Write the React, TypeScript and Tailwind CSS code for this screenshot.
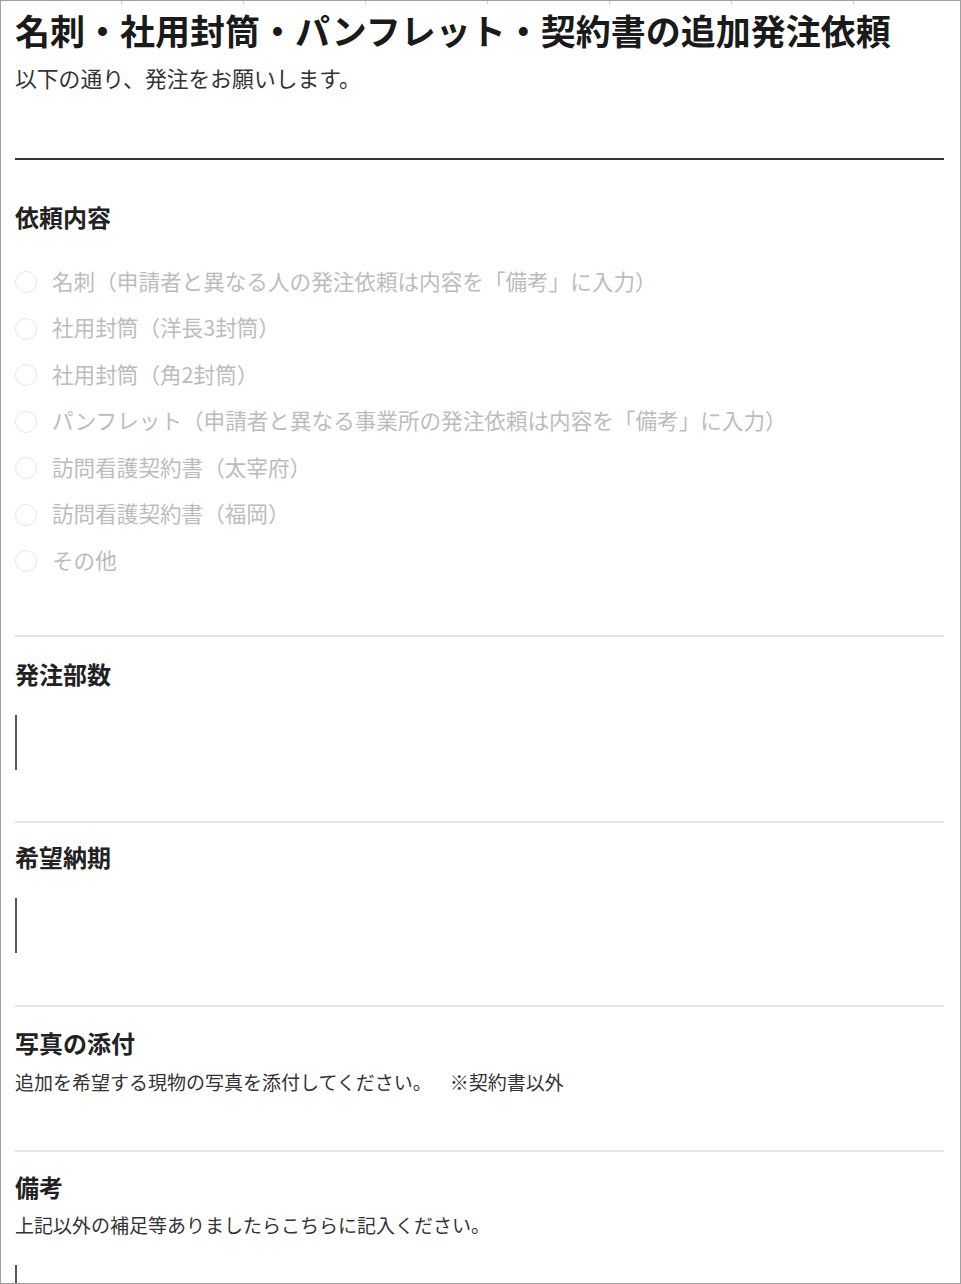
import React from 'react';

const font = { fontFamily: '"Noto Sans CJK JP", "Noto Sans", sans-serif' };

const options = [
  '名刺（申請者と異なる人の発注依頼は内容を「備考」に入力）',
  '社用封筒（洋長3封筒）',
  '社用封筒（角2封筒）',
  'パンフレット（申請者と異なる事業所の発注依頼は内容を「備考」に入力）',
  '訪問看護契約書（太宰府）',
  '訪問看護契約書（福岡）',
  'その他',
];

const ticks = [120, 242, 364, 486, 608, 730, 852];

const Heading: React.FC<{ children: React.ReactNode; className?: string }> = ({ children, className = '' }) => (
  <h2 className={`text-[24px] font-bold leading-[32px] text-[#222] ${className}`}>{children}</h2>
);

const Divider: React.FC<{ className?: string }> = ({ className = '' }) => (
  <div className={`h-[2px] bg-[#e4e4e4] ${className}`} />
);

const LineInput: React.FC<{ className?: string }> = ({ className = '' }) => (
  <div className={`h-[55px] border-l-2 border-[#555] ${className}`} />
);

export default function App() {
  return (
    <div style={font} className="relative h-[1284px] w-[961px] overflow-hidden border border-[#a0a0a0] bg-white">
      {ticks.map((x) => (
        <span key={x} className="absolute top-0 h-[3px] w-px bg-[#cfcfcf]" style={{ left: x }} />
      ))}

      <div className="px-[14px]">
        <h1 className="mt-[7px] text-[35px] font-bold leading-[44px] text-[#1a1a1a] whitespace-nowrap">
          名刺・社用封筒・パンフレット・契約書の追加発注依頼
        </h1>
        <p className="mt-[11px] text-[21.8px] leading-[30px] text-[#333]">以下の通り、発注をお願いします。</p>

        <div className="mt-[65px] h-[2px] mr-[2px] bg-[#333]" />

        {/* 依頼内容 */}
        <Heading className="mt-[41px]">依頼内容</Heading>
        <div className="mt-[26px] flex flex-col">
          {options.map((o) => (
            <label key={o} className="flex h-[46.5px] items-center gap-[15px]">
              <span className="h-[22px] w-[22px] rounded-full border border-[#e6e6e6]" />
              <span className="pb-[3px] text-[21.6px] leading-[30px] text-[#bcbcbc] whitespace-nowrap">{o}</span>
            </label>
          ))}
        </div>

        <Divider className="mt-[50px] mr-[2px]" />

        {/* 発注部数 */}
        <Heading className="mt-[21px]">発注部数</Heading>
        <LineInput className="mt-[25px]" />

        <Divider className="mt-[51px] mr-[2px]" />

        {/* 希望納期 */}
        <Heading className="mt-[18px]">希望納期</Heading>
        <LineInput className="mt-[25px]" />

        <Divider className="mt-[52px] mr-[2px]" />

        {/* 写真の添付 */}
        <Heading className="mt-[20px]">写真の添付</Heading>
        <p className="mt-[9px] text-[19px] leading-[28px] text-[#333] whitespace-pre">
          追加を希望する現物の写真を添付してください。　  ※契約書以外
        </p>

        <Divider className="mt-[54px] mr-[2px]" />

        {/* 備考 */}
        <Heading className="mt-[19px]">備考</Heading>
        <p className="mt-[8px] text-[19px] leading-[28px] text-[#333]">
          上記以外の補足等ありましたらこちらに記入ください。
        </p>
        <LineInput className="mt-[26px]" />
      </div>
    </div>
  );
}
